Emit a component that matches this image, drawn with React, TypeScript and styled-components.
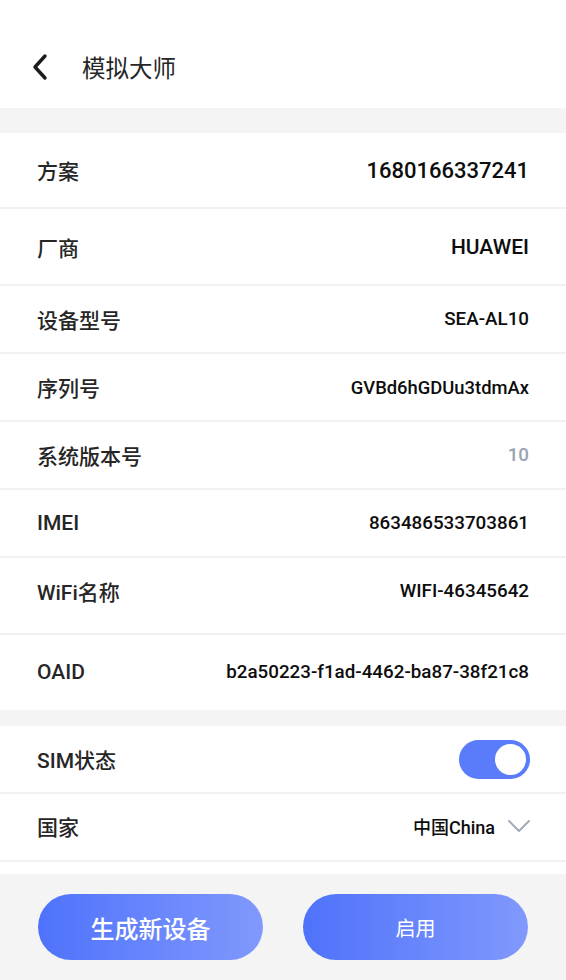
import React from 'react';
import styled, { createGlobalStyle } from 'styled-components';

const GlobalStyle = createGlobalStyle`
  html, body {
    margin: 0;
    padding: 0;
    background: #f4f4f4;
    font-family: Roboto, "Noto Sans CJK SC", sans-serif;
  }
`;

const Page = styled.div`
  width: 566px;
  height: 980px;
  display: flex;
  flex-direction: column;
  background: #f4f4f4;
  overflow: hidden;
`;

const Header = styled.header`
  height: 108px;
  flex-shrink: 0;
  background: #fff;
  display: flex;
  align-items: center;
  padding: 26px 0 0 28px;
  box-sizing: border-box;
`;

const BackButton = styled.button`
  width: 24px;
  height: 32px;
  padding: 0;
  border: none;
  background: none;
  display: flex;
  align-items: center;
  justify-content: center;
  margin-right: 30px;
`;

const Title = styled.h1`
  margin: 0;
  font-size: 23.5px;
  font-weight: 400;
  color: #262626;
  font-family: "Noto Sans CJK SC", sans-serif;
`;

const Band = styled.div<{ $h: number }>`
  height: ${(p) => p.$h}px;
  flex-shrink: 0;
`;

const Card = styled.section<{ $tail?: number }>`
  background: #fff;
  flex-shrink: 0;
  padding-bottom: ${(p) => p.$tail ?? 0}px;
`;

const Row = styled.div<{ $h: number; $lift?: number; $last?: boolean }>`
  height: ${(p) => p.$h}px;
  display: flex;
  align-items: center;
  justify-content: space-between;
  padding: 0 37px ${(p) => p.$lift ?? 0}px 37px;
  box-sizing: content-box;
  border-bottom: ${(p) => (p.$last ? 'none' : '2px solid #f1f1f1')};
`;

const Label = styled.span`
  font-size: 21px;
  font-weight: 500;
  color: #262626;
  font-family: Roboto, "Noto Sans CJK SC", sans-serif;
`;

const Value = styled.span<{ $size?: number; $muted?: boolean }>`
  font-size: ${(p) => p.$size ?? 18.8}px;
  font-weight: 500;
  color: ${(p) => (p.$muted ? '#9aa3b4' : '#0d0d0d')};
  font-family: Roboto, "Noto Sans CJK SC", sans-serif;
`;

const Toggle = styled.div`
  width: 71px;
  height: 39px;
  border-radius: 20px;
  background: #5a7cfb;
  display: flex;
  align-items: center;
  justify-content: flex-end;
  padding: 0 4px;
  box-sizing: border-box;
  margin-right: -1px;
`;

const Knob = styled.div`
  width: 31px;
  height: 31px;
  border-radius: 50%;
  background: #fff;
`;

const Select = styled.div`
  display: flex;
  align-items: center;
  gap: 12px;
  margin-right: -2px;
`;

const Footer = styled.footer`
  flex: 1;
  display: flex;
  justify-content: space-between;
  align-items: flex-start;
  padding: 20px 38px 0 38px;
`;

const ActionButton = styled.button<{ $strong?: boolean }>`
  width: 225px;
  height: 66px;
  border: none;
  border-radius: 33px;
  background: linear-gradient(90deg, #4e72fb 0%, #8199fd 100%);
  color: #fff;
  font-family: "Noto Sans CJK SC", sans-serif;
  font-size: ${(p) => (p.$strong ? 24 : 20)}px;
  font-weight: ${(p) => (p.$strong ? 500 : 400)};
  cursor: pointer;
`;

const fields = [
  { label: '方案', value: '1680166337241', h: 74, size: 22 },
  { label: '厂商', value: 'HUAWEI', h: 75, size: 21 },
  { label: '设备型号', value: 'SEA-AL10', h: 66 },
  { label: '序列号', value: 'GVBd6hGDUu3tdmAx', h: 66, size: 18.4 },
  { label: '系统版本号', value: '10', h: 66, muted: true },
  { label: 'IMEI', value: '863486533703861', h: 66 },
  { label: 'WiFi名称', value: 'WIFI-46345642', h: 65, lift: 10 },
  { label: 'OAID', value: 'b2a50223-f1ad-4462-ba87-38f21c8', h: 73, lift: 2, last: true },
];

export default function App() {
  return (
    <Page>
      <GlobalStyle />
      <Header>
        <BackButton aria-label="back">
          <svg width="20" height="28" viewBox="0 0 20 28">
            <path d="M15 3 L5 14 L15 25" fill="none" stroke="#1c1c1c" strokeWidth="3.4" strokeLinecap="round" strokeLinejoin="round" />
          </svg>
        </BackButton>
        <Title>模拟大师</Title>
      </Header>
      <Band $h={25} />
      <Card>
        {fields.map((f) => (
          <Row key={f.label} $h={f.h} $lift={f.lift} $last={f.last}>
            <Label>{f.label}</Label>
            <Value $size={f.size} $muted={f.muted}>{f.value}</Value>
          </Row>
        ))}
      </Card>
      <Band $h={16} />
      <Card $tail={12}>
        <Row $h={66}>
          <Label>SIM状态</Label>
          <Toggle>
            <Knob />
          </Toggle>
        </Row>
        <Row $h={64} $lift={2}>
          <Label>国家</Label>
          <Select>
            <Value $size={18}>中国China</Value>
            <svg width="24" height="14" viewBox="0 0 24 14">
              <path d="M2 2 L12 12 L22 2" fill="none" stroke="#a3abb9" strokeWidth="2" strokeLinecap="round" strokeLinejoin="round" />
            </svg>
          </Select>
        </Row>
      </Card>
      <Footer>
        <ActionButton $strong>生成新设备</ActionButton>
        <ActionButton>启用</ActionButton>
      </Footer>
    </Page>
  );
}
